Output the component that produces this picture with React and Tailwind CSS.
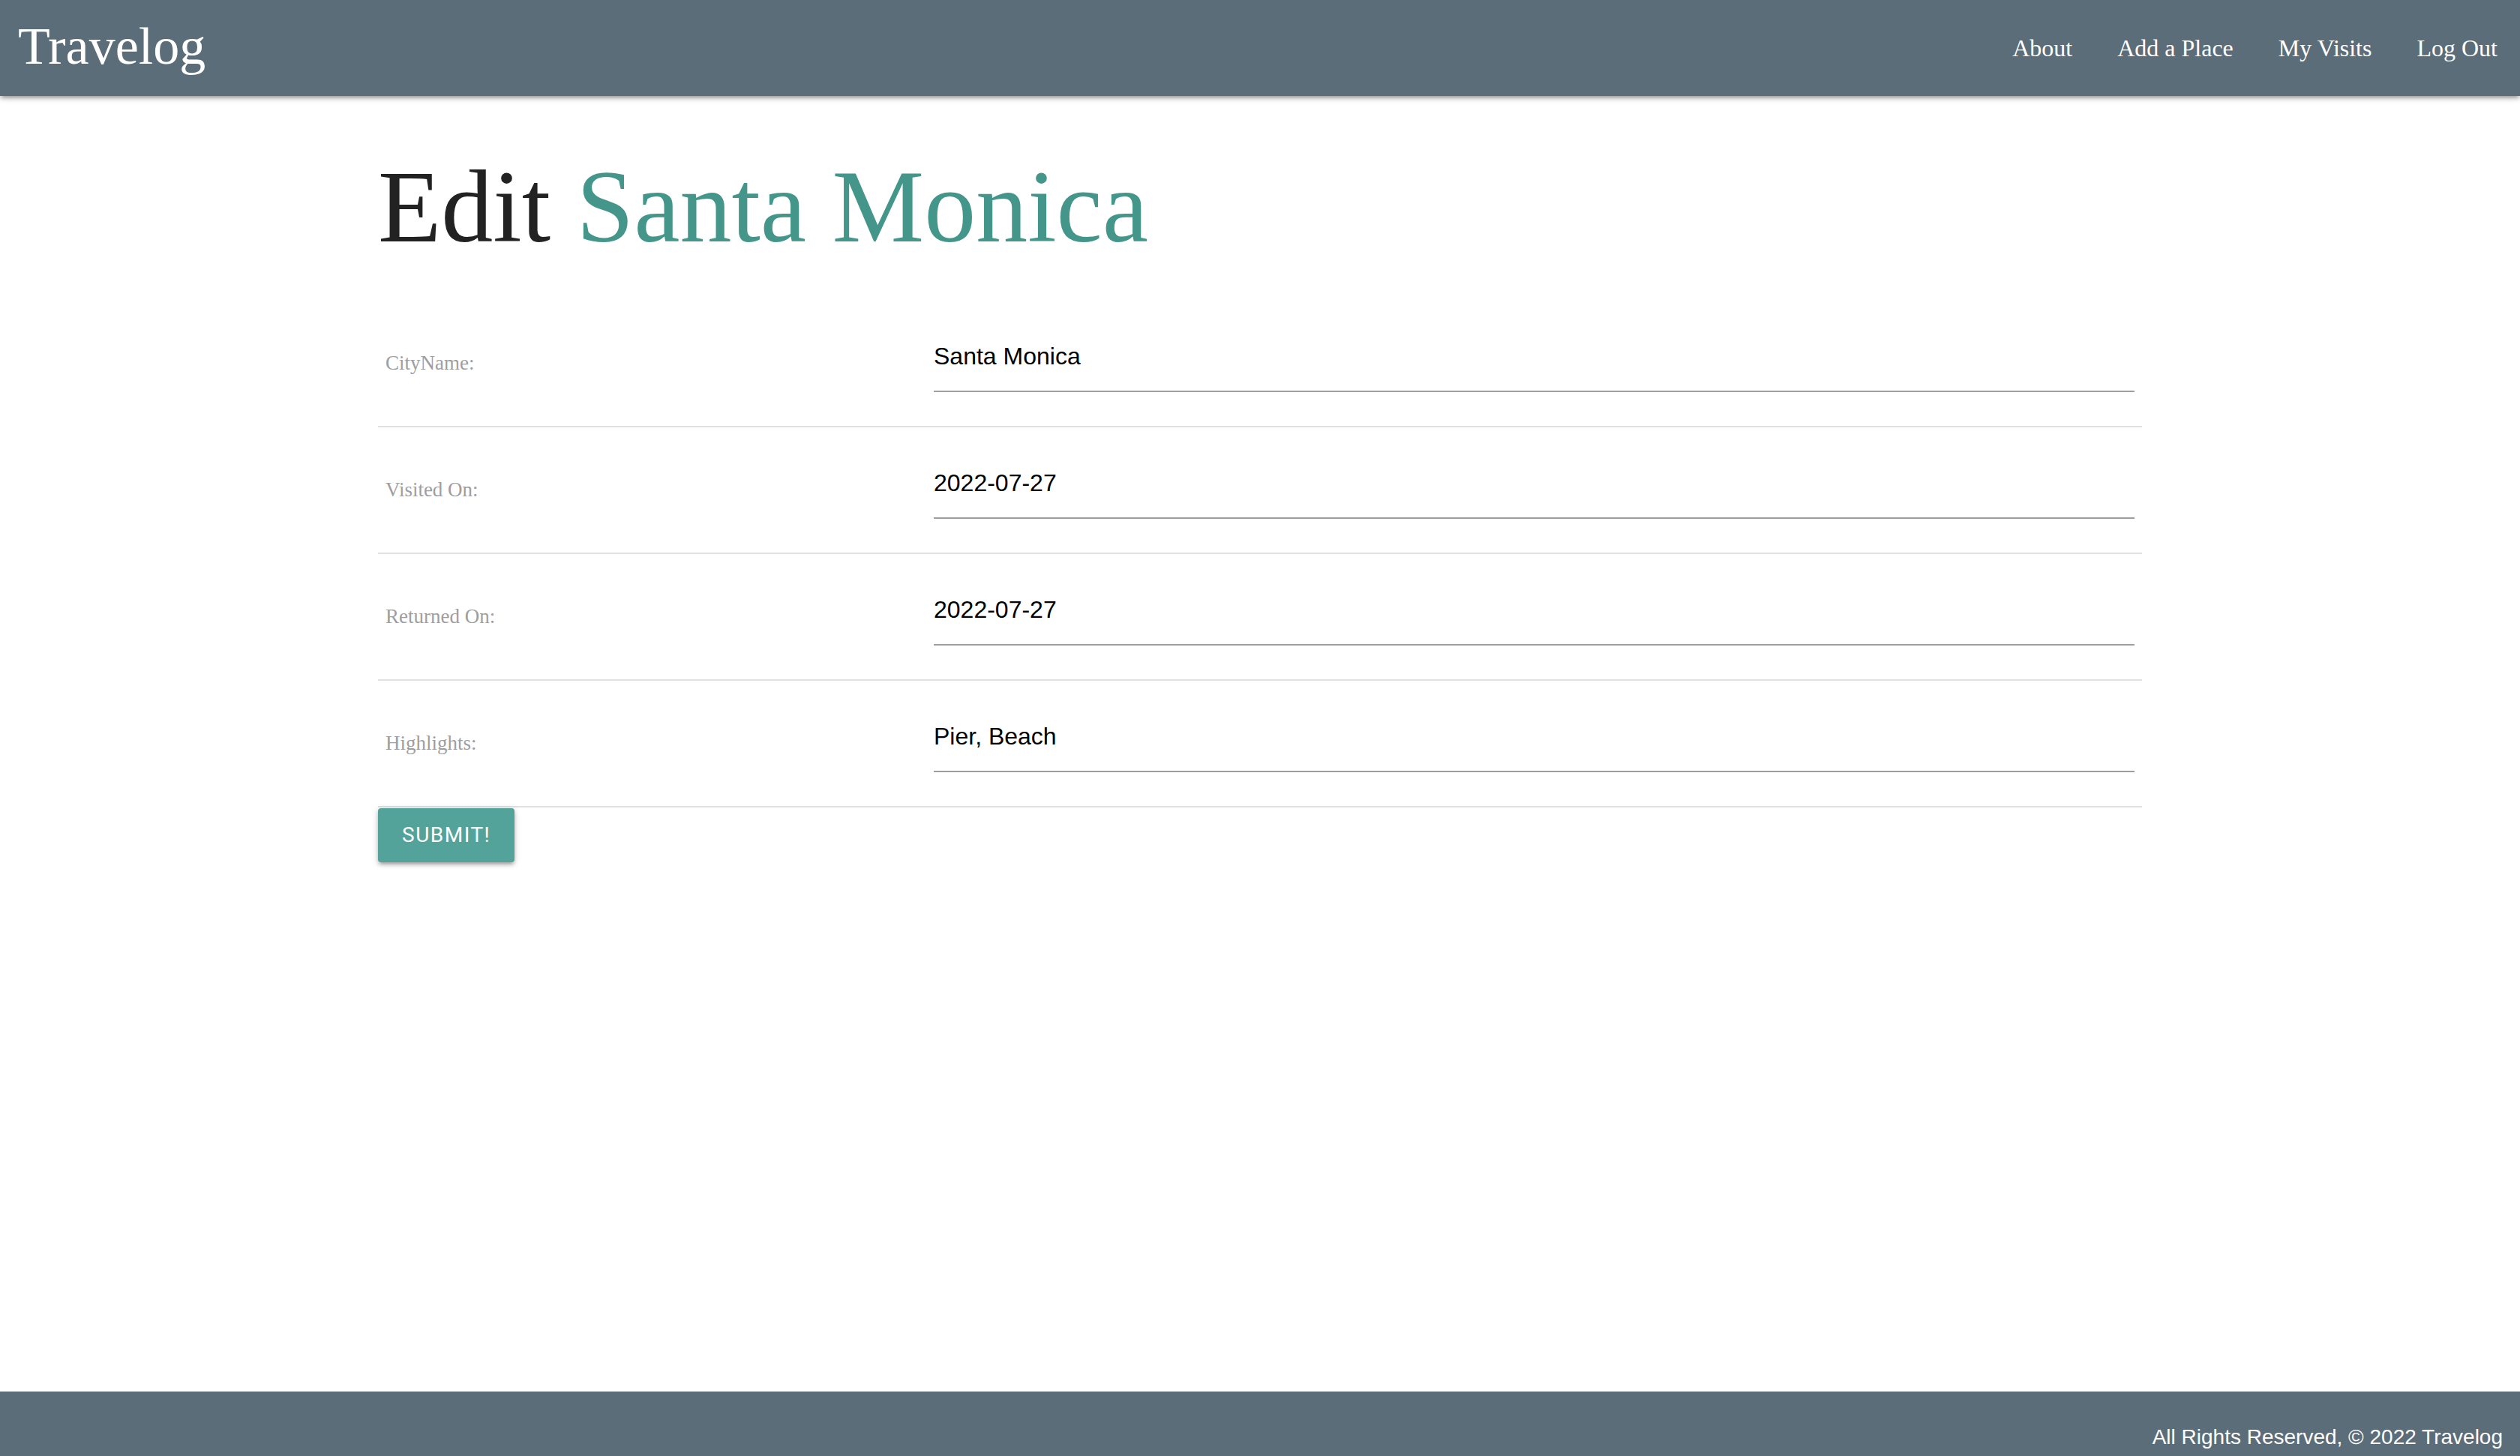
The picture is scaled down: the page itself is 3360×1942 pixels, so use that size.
import React from 'react';

const serif = "font-['Liberation_Serif','Times_New_Roman',serif]";
const sans = "font-['Liberation_Sans',Arial,sans-serif]";

const fields = [
  { label: 'CityName:', value: 'Santa Monica' },
  { label: 'Visited On:', value: '2022-07-27' },
  { label: 'Returned On:', value: '2022-07-27' },
  { label: 'Highlights:', value: 'Pier, Beach' },
];

const Navbar = () => (
  <nav className="relative z-10 flex h-[128px] items-start justify-between bg-[#5b6d79] text-white shadow-[0_4px_4px_0_rgba(0,0,0,0.14),0_6px_2px_-4px_rgba(0,0,0,0.12),0_2px_10px_0_rgba(0,0,0,0.2)]">
    <a href="#" className={`${serif} pl-[24px] text-[70px] leading-[123px]`}>
      Travelog
    </a>
    <ul className={`${serif} flex text-[32px] leading-[128px]`}>
      <li><a href="#" className="block px-[30px]">About</a></li>
      <li><a href="#" className="block px-[30px]">Add a Place</a></li>
      <li><a href="#" className="block px-[30px]">My Visits</a></li>
      <li><a href="#" className="block px-[30px]">Log Out</a></li>
    </ul>
  </nav>
);

const EditPlace = () => (
  <main className="flex-1">
    <div className="mx-auto w-[2352px]">
      <h1 className={`${serif} mt-[72px] mb-[49px] text-[138px] leading-[1.1] text-[#222222]`}>
        Edit <span className="text-[#44968a]">Santa Monica</span>
      </h1>
      <form onSubmit={(e) => e.preventDefault()}>
        <div>
          {fields.map((f) => (
            <div key={f.label} className="flex items-center border-b-2 border-[#e0e0e0]">
              <div className="w-[731px] shrink-0 px-[10px]">
                <label className={`${serif} text-[27px] text-[#9e9e9e]`}>{f.label}</label>
              </div>
              <div className="flex-1 px-[10px] pt-[26px] pb-[29px]">
                <input
                  type="text"
                  defaultValue={f.value}
                  className={`${sans} mb-[16px] block h-[96px] w-full border-b-2 border-[#9e9e9e] bg-transparent pt-[4px] text-[32px] text-black outline-none`}
                />
              </div>
            </div>
          ))}
        </div>
        <button
          type="submit"
          className="mt-[1px] h-[72px] rounded-[4px] bg-[#53a39a] px-[32px] font-['Roboto',Arial,sans-serif] text-[28px] leading-[72px] tracking-[1.5px] text-white uppercase shadow-[0_4px_4px_0_rgba(0,0,0,0.14),0_6px_2px_-4px_rgba(0,0,0,0.12),0_2px_10px_0_rgba(0,0,0,0.2)]"
        >
          Submit!
        </button>
      </form>
    </div>
  </main>
);

const Footer = () => (
  <footer className="h-[86px] overflow-hidden bg-[#5b6d79]">
    <div className={`${sans} pt-[45px] pr-[23px] text-right text-[28px] leading-[32px] text-white`}>
      All Rights Reserved, © 2022 Travelog
    </div>
  </footer>
);

const App = () => (
  <div className="flex min-h-screen flex-col bg-white">
    <Navbar />
    <EditPlace />
    <Footer />
  </div>
);

export default App;
